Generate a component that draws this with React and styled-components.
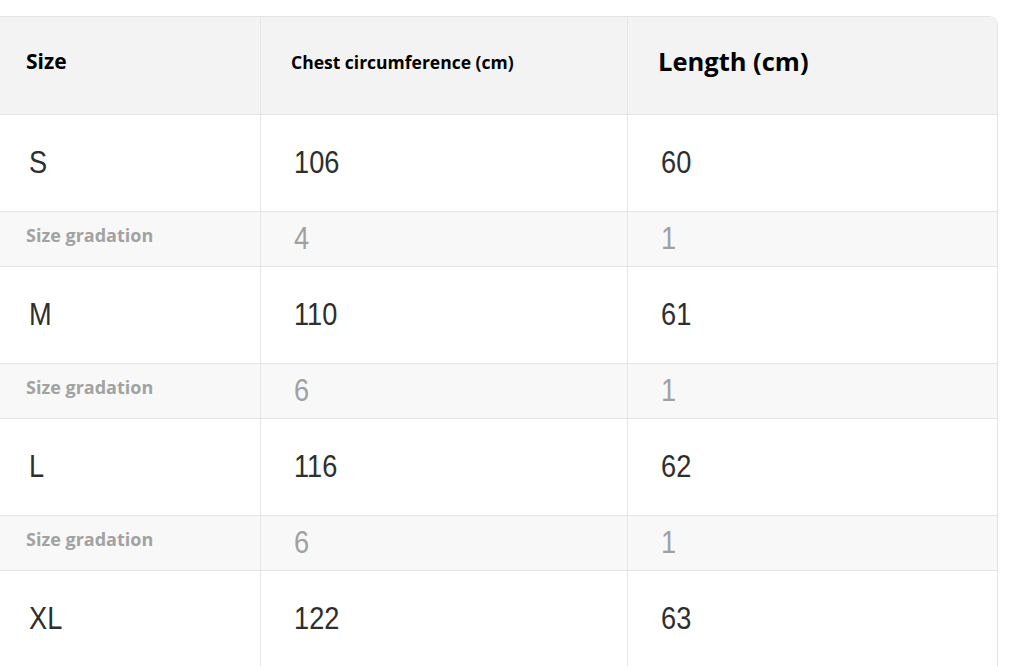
import React from "react";
import styled, { createGlobalStyle } from "styled-components";

const GlobalStyle = createGlobalStyle`
  html, body {
    margin: 0;
    padding: 0;
    background: #fff;
    overflow: hidden;
  }
  body {
    font-family: "Open Sans", "Liberation Sans", sans-serif;
  }
`;

const Page = styled.div`
  width: 1024px;
  height: 666px;
  padding-top: 16px;
  box-sizing: border-box;
  overflow: hidden;
`;

const Table = styled.div`
  margin-left: -4px;
  width: 1001px;
  border-top: 1px solid #e4e4e4;
  border-right: 1px solid #e4e4e4;
  border-top-right-radius: 9px;
  overflow: hidden;
`;

const Row = styled.div`
  box-sizing: border-box;
  display: grid;
  grid-template-columns: 265px 367px 1fr;
  height: ${(p) => p.$h}px;
  background: ${(p) => p.$bg};
  border-bottom: 1px solid #e4e4e4;
`;

const Cell = styled.div`
  display: flex;
  align-items: center;
  padding-left: 30px;
  border-right: 1px solid #e6e6e6;
  &:last-child {
    border-right: none;
  }
`;

const HeadText = styled.span`
  font-family: "Open Sans", sans-serif;
  font-weight: 700;
  font-size: ${(p) => p.$size}px;
  color: #000;
  margin-top: ${(p) => p.$shift}px;
`;

const Value = styled.span`
  display: inline-block;
  font-family: "Liberation Sans", Arial, sans-serif;
  font-size: 32px;
  color: ${(p) => (p.$muted ? "#a0a0a0" : "#2e2e2e")};
  transform: scaleX(0.85);
  transform-origin: left center;
  margin-left: 3px;
  margin-top: -2px;
`;

const GradLabel = styled.span`
  font-family: "Open Sans", sans-serif;
  font-weight: 700;
  font-size: 18px;
  color: #a2a2a2;
  margin-top: -8px;
`;

const rows = [
  { size: "S", chest: "106", length: "60" },
  { grad: true, chest: "4", length: "1" },
  { size: "M", chest: "110", length: "61" },
  { grad: true, chest: "6", length: "1" },
  { size: "L", chest: "116", length: "62" },
  { grad: true, chest: "6", length: "1" },
  { size: "XL", chest: "122", length: "63" },
];

export default function App() {
  return (
    <Page>
      <GlobalStyle />
      <Table>
        <Row $h={98} $bg="#f3f3f3">
          <Cell>
            <HeadText $size={21} $shift={-10}>Size</HeadText>
          </Cell>
          <Cell>
            <HeadText $size={17.5} $shift={-8}>Chest circumference (cm)</HeadText>
          </Cell>
          <Cell>
            <HeadText $size={25.5} $shift={-10}>Length (cm)</HeadText>
          </Cell>
        </Row>
        {rows.map((r, i) =>
          r.grad ? (
            <Row key={i} $h={55} $bg="#f8f8f8">
              <Cell>
                <GradLabel>Size gradation</GradLabel>
              </Cell>
              <Cell>
                <Value $muted>{r.chest}</Value>
              </Cell>
              <Cell>
                <Value $muted>{r.length}</Value>
              </Cell>
            </Row>
          ) : (
            <Row key={i} $h={97} $bg="#fff">
              <Cell>
                <Value>{r.size}</Value>
              </Cell>
              <Cell>
                <Value>{r.chest}</Value>
              </Cell>
              <Cell>
                <Value>{r.length}</Value>
              </Cell>
            </Row>
          )
        )}
      </Table>
    </Page>
  );
}
